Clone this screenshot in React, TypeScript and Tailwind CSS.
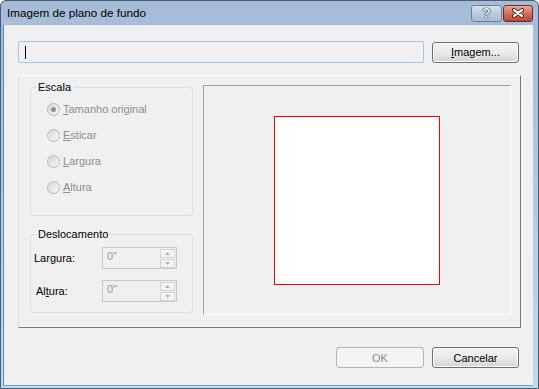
import React from 'react'

function Radio({ label, u, checked }: { label: string; u: number; checked?: boolean }) {
  return (
    <div className="flex h-[26px] items-center gap-[3px]">
      <span className="flex h-[13px] w-[13px] items-center justify-center rounded-full border border-[#b9b9b9] bg-gradient-to-br from-[#d8d8d8] to-[#f7f7f7]">
        {checked && <span className="h-[5px] w-[5px] rounded-full bg-[#8f8f8f]" />}
      </span>
      <span className="text-[#8d8d8d]">
        {label.slice(0, u)}
        <span className="underline">{label[u]}</span>
        {label.slice(u + 1)}
      </span>
    </div>
  )
}

function Spin() {
  return (
    <div className="flex h-[22px] w-[75px] items-center justify-between border border-[#c9c9c9] bg-[#f0f0f0] pl-[4px] pr-[1px]">
      <span className="self-start pt-[1px] text-[#9a9a9a] leading-[14px]">0"</span>
      <div className="flex flex-col gap-[1px]">
        <span className="flex h-[9px] w-[15px] items-center justify-center border border-[#d4d4d4] bg-[#f4f4f4]">
          <svg width="5" height="3" viewBox="0 0 5 3"><path d="M0 3 L2.5 0 L5 3 Z" fill="#b0b0b0" /></svg>
        </span>
        <span className="flex h-[9px] w-[15px] items-center justify-center border border-[#d4d4d4] bg-[#f4f4f4]">
          <svg width="5" height="3" viewBox="0 0 5 3"><path d="M0 0 L2.5 3 L5 0 Z" fill="#b0b0b0" /></svg>
        </span>
      </div>
    </div>
  )
}

function Button({ children, disabled }: { children: React.ReactNode; disabled?: boolean }) {
  return (
    <button
      className={
        disabled
          ? 'flex h-[21px] w-[88px] items-center justify-center rounded-[3px] border border-[#b5b5b5] bg-[#f4f4f4] text-[#8b8b8b]'
          : 'flex h-[21px] w-[87px] items-center justify-center rounded-[3px] border border-[#707070] bg-gradient-to-b from-[#f2f2f2] via-[#ebebeb] to-[#d4d4d4] text-black shadow-[inset_0_0_0_1px_#fcfcfc]'
      }
    >
      {children}
    </button>
  )
}

export default function App() {
  return (
    <div className="h-[389px] w-[539px] font-['Liberation_Sans',sans-serif] text-[11px] leading-[16px]">
      <div className="flex h-full w-full flex-col rounded-t-[6px] border border-[#4d5c6e] bg-gradient-to-b from-[#a4bcd8] to-[#c3d7ed]">
        {/* title bar */}
        <div className="flex h-[24px] shrink-0 items-center pl-[6px] pr-[5px]">
          <span className="text-[11.7px] text-black">Imagem de plano de fundo</span>
          <div className="ml-auto flex gap-[1px]">
            <span className="flex h-[17px] w-[31px] items-center justify-center rounded-[3px] border border-[#6c7f96] bg-gradient-to-b from-[#d6e2ef] via-[#b9cbe0] to-[#a7bcd4] text-[14px] font-bold leading-none text-[#e4e8ee] [text-shadow:0_0_1px_#2a3644,0_0_1px_#2a3644,0_0_1px_#2a3644]">
              ?
            </span>
            <span className="flex h-[17px] w-[30px] items-center justify-center rounded-[3px] border border-[#6e2b22] bg-gradient-to-b from-[#e5aa9c] via-[#d16f5b] to-[#c0462f]">
              <svg width="14" height="10" viewBox="0 0 14 10">
                <path d="M3 2 L11 8 M11 2 L3 8" stroke="#3a1510" strokeWidth="4" strokeLinecap="round" />
                <path d="M3 2 L11 8 M11 2 L3 8" stroke="#ffffff" strokeWidth="2.2" strokeLinecap="round" />
              </svg>
            </span>
          </div>
        </div>

        {/* client */}
        <div className="ml-[2px] mr-[5px] flex h-[360px] flex-col border-l border-[#3d93d8] bg-[#f0f0f0] pl-[14px] pr-[14px] pt-[16px] shadow-[0_1px_0_#4fb3e4]">
          <div className="flex items-center gap-[8px]">
            <div className="flex h-[22px] w-[406px] items-center rounded-[2px] border border-[#a6c5e3] bg-[#f0f0f0] pl-[6px]">
              <span className="h-[13px] w-[1px] bg-black" />
            </div>
            <Button>
              <span>
                <span className="underline">I</span>magem...
              </span>
            </Button>
          </div>

          <div className="mt-[12px] flex h-[253px] w-[503px] items-start border-b border-l border-r border-t border-b-[#7a7a7a] border-l-[#dcdcdc] border-r-[#7a7a7a] border-t-[#fdfdfd]">
            <div className="flex flex-col pl-[11px] pt-[11px]">
              <div className="relative h-[129px] w-[163px] rounded-[3px] border border-[#d5dfe5] pl-[16px] pt-[8px]">
                <span className="absolute left-[5px] top-[-9px] bg-[#f0f0f0] px-[2px] text-black">Escala</span>
                <Radio label="Tamanho original" u={0} checked />
                <Radio label="Esticar" u={0} />
                <Radio label="Largura" u={0} />
                <Radio label="Altura" u={0} />
              </div>
              <div className="relative mt-[18px] flex h-[79px] w-[163px] flex-col gap-[11px] rounded-[3px] border border-[#d5dfe5] pt-[12px]">
                <span className="absolute left-[5px] top-[-9px] bg-[#f0f0f0] px-[2px] text-black">Deslocamento</span>
                <div className="flex items-center">
                  <span className="w-[71px] pl-[3px] text-black">
                    Lar<span className="underline">g</span>ura:
                  </span>
                  <Spin />
                </div>
                <div className="flex items-center">
                  <span className="w-[71px] pl-[5px] text-black">
                    Al<span className="underline">t</span>ura:
                  </span>
                  <Spin />
                </div>
              </div>
            </div>
            <div className="ml-[10px] mt-[9px] flex h-[230px] w-[308px] items-center justify-center border border-b-white border-l-[#a0a0a0] border-r-white border-t-[#a0a0a0]">
              <div className="h-[169px] w-[166px] border border-[#ff0000] bg-white" />
            </div>
          </div>

          <div className="mt-[19px] flex justify-end gap-[8px]">
            <Button disabled>OK</Button>
            <Button>Cancelar</Button>
          </div>
        </div>
      </div>
    </div>
  )
}
